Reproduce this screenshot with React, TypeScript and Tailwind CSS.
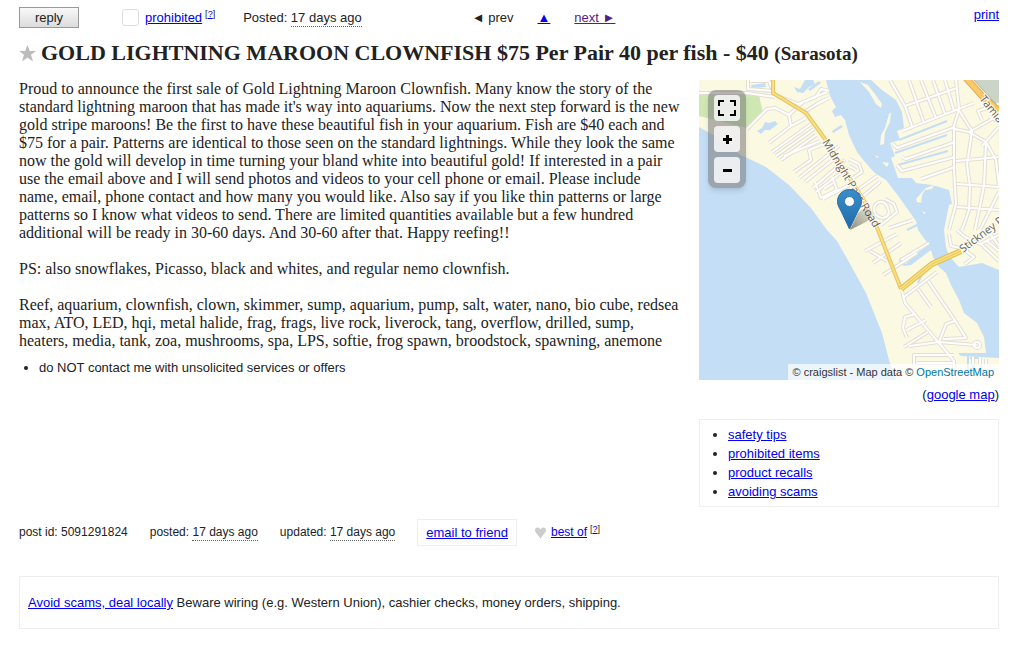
import type { ReactNode } from 'react';

const safetyLinks = ['safety tips', 'prohibited items', 'product recalls', 'avoiding scams'];

// side streets, in map units
const streets = [
  'M0 13 H48 L76 17', 'M49 0 V9 L74 11 L70 1 H52',
  'M48 49 L68 29 L76 28 L90 35 L92 46 L70 63', 'M90 35 L104 22 L128 12', 'M92 46 L107 38',
  'M74 14 L99 24 L117 17 L122 9 L130 11', 'M104 33 L118 24 L130 18',
  'M73 72 L112 44', 'M77 76 L115 49', 'M82 80 L117 55', 'M85 76 L121 61', 'M95 92 L112 80 L110 70 L125 64',
  'M100 98 L140 66', 'M106 102 L136 78', 'M114 108 L146 80', 'M117 112 L148 88',
  'M116 102 L122 118 L138 110 L133 97', 'M124 119 L150 105', 'M125 109 L134 103',
  'M150 79 L160 84 L163 92 L154 98', 'M150 86 L157 90', 'M160 109 L178 96', 'M164 116 L181 102',
  'M177 135 C170 124 184 117 188 126 C194 137 183 141 177 135', 'M186 119 L195 124 L198 132 L182 145', 'M190 148 L214 140',
  'M191 0 L206 26 L213 46', 'M206 26 L258 8', 'M210 0 L225 43', 'M222 0 L237 38', 'M234 0 L246 34', 'M246 0 L255 31',
  'M203 51 L275 23', 'M257 0 L260 29 L255 46 V90 L257 124 L250 150',
  'M194 64 L198 68 L256 47', 'M203 77 L207 79 L256 62', 'M198 85 L203 91 L256 77', 'M222 99 L256 87',
  'M256 49 L270 52 L287 62 L297 80 L300 106', 'M259 29 L273 51 L268 85 L271 106 L270 130 L263 150',
  'M270 52 L300 35', 'M283 66 L300 47', 'M287 62 L285 106 L276 150', 'M257 81 L300 77', 'M258 104 L300 107',
  'M258 127 L300 130', 'M300 112 L281 150', 'M283 40 L279 31 L300 24', 'M291 37 L300 42',
  'M166 171 L198 154', 'M174 183 L202 163', 'M171 171 L188 181', 'M202 180 L230 163', 'M184 195 L218 173',
  'M205 217 L238 192', 'M219 209 L232 227', 'M229 201 L255 239 L267 258 L245 259',
  'M203 211 L206 223 L229 250 L240 263 L255 281 V300', 'M217 234 L206 237 L204 248 L208 258',
  'M208 250 L227 240', 'M205 267 L229 252', 'M210 266 L240 262 L277 265', 'M240 262 L247 244 L256 241',
  'M215 285 V275 H255', 'M218 283 H254', 'M275 265 a3 3 0 1 0 6 0 a3 3 0 1 0 -6 0',
  'M250 154 L252 166 L262 168 L268 164 L268 172 L275 177 L266 184', 'M258 150 L266 157 L281 164 L300 155', 'M282 164 L300 181', 'M288 161 L300 171', 'M292 155 L300 166',
  'M274 285 V277', 'M281 285 V277', 'M287 285 V279',
];

const water = [
  // gulf
  'M0 47 L16 56 L42 75 L67 87 L90 105 L112 128 L128 150 L138 161 L150 182 L167 213 L183 253 L190 280 L197 300 H0 Z',
  // bay
  'M127 0 L131 16 L137 27 L133 31 L136 37 L142 35 L146 40 L150 55 L158 72 L166 82 L173 90 L177 94 L187 100 L200 117 L217 141 L219 150 L230 165 L214 176 L207 184 L201 177 L200 181 L205 186 L212 185 L232 170 L234 177 L240 187 L247 193 L252 205 L260 220 L265 233 L278 243 L285 257 L287 273 L259 273 L262 276 L300 278 V190 L283 183 L260 187 L250 176 L247 167 L245 150 L250 125 L253 124 L250 110 L233 105 L217 103 L213 98 L199 98 L192 78 L196 76 L191 63 L201 60 L198 51 L205 48 L203 32 L197 20 L183 10 L172 0 Z',
  'M106 0 L101 9 L95 7 L98 12 L104 13 L110 7 L116 4 L114 0 Z',
  'M133 51 L142 45 L144 47 L134 53 Z',
  'M58 51 L63 48 L66 42 L70 43 L76 41 L79 44 L71 50 L66 50 L62 54 Z',
  'M52 5 L66 3 L67 7 L53 8 Z',
  'M109 9 L120 1 L122 3 L111 11 Z',
  'M271 277 h12 v18 h-2 v-16 h-5 v16 h-3 v-16 h-2 Z',
];

const canals = ['M200 60 L248 41', 'M196 73 L248 55', 'M199 85 L249 71', 'M170 112 L182 102', 'M208 150 L222 143', 'M219 203 L223 194', 'M266 184 L276 177', 'M269 295 V276'];

const islands = [
  'M190 34 L192 32 L191 42 L186 52 L185 64 L181 65 L182 55 L186 48 Z',
  'M161 2 L169 5 L176 14 L183 24 L182 28 L177 24 L170 12 Z',
  'M176 75 L180 77 L178 78 Z', 'M183 82 L190 83 L188 87 Z',
  'M217 119 L223 112 L227 108 L235 105 L233 109 L226 110 L223 115 L222 123 L218 122 Z',
  'M223 131 L227 133 L225 134 Z',
];

const midnightPass = 'M74 0 V13 L107 33 L126 59 L148 94 L166 122 L179 150 L202 209';
const stickney = 'M202 209 L233 184 L262 171';
const tamiami = 'M267 -2 L284 17 L300 31';

const Streets = ({ className }: { className: string }) => (
  <g className={className} fill="none" strokeLinejoin="round">
    {streets.map((d) => <path key={d} d={d} />)}
  </g>
);

const MapTiles = () => (
  <svg viewBox="0 0 300 300" className="block size-full" role="img" aria-label="Map of Sarasota" fontFamily='"Open Sans", sans-serif'>
    <rect width="300" height="300" fill="#fcf9e3" />
    <path d="M0 15 H60 L64 33 L48 48 L0 36 Z" fill="#cfe8b3" />
    <path d="M275 0 H300 V29 Z" fill="#cbd5c7" />
    <g fill="#c4def5">{water.map((d) => <path key={d} d={d} />)}</g>
    <g stroke="#c4def5" strokeWidth="2" fill="none">{canals.map((d) => <path key={d} d={d} />)}</g>
    <g fill="#fcf9e3">{islands.map((d) => <path key={d} d={d} />)}</g>
    <Streets className="stroke-[#e2ded3] stroke-[4px]" />
    <Streets className="stroke-white stroke-[2px]" />
    <g fill="none" strokeLinejoin="round">
      <path d={midnightPass} stroke="#e8c55f" strokeWidth="4" />
      <path d={midnightPass} stroke="#f9df82" strokeWidth="2" />
      <path d={stickney} stroke="#e0bc51" strokeWidth="6" />
      <path d={stickney} stroke="#fae07a" strokeWidth="4" />
      <path d={stickney} stroke="#e6c863" strokeWidth="1" />
      <path d={tamiami} stroke="#e3ab4b" strokeWidth="7" />
      <path d={tamiami} stroke="#fbc96b" strokeWidth="5" />
      <path d="M275 0 L297 24" stroke="#aeb3a8" strokeWidth="1" />
    </g>
    <g fill="#606060" stroke="#fffdf0" strokeWidth="2" paintOrder="stroke" fontSize="11">
      <text transform="translate(123 62) rotate(59)">Midnight Pass Road</text>
      <text transform="translate(264 173) rotate(-37)">Stickney P</text>
      <text transform="translate(280 19) rotate(52)">Tamia</text>
    </g>
  </svg>
);

const MapMarker = () => (
  <svg viewBox="0 0 41 41" className="absolute top-[109px] left-[138px] size-[41px]" aria-hidden="true">
    <defs>
      <linearGradient id="pin" x1="0" y1="0" x2="0" y2="1">
        <stop offset="0" stopColor="#3b8ecb" />
        <stop offset="1" stopColor="#1f6ba9" />
      </linearGradient>
      <linearGradient id="shade" x1="0" y1="1" x2="1" y2="0">
        <stop offset="0" stopColor="#000" stopOpacity=".45" />
        <stop offset="1" stopColor="#000" stopOpacity=".08" />
      </linearGradient>
    </defs>
    <path d="M13 41 L20 26 C24 18 34 18 35 24 C36 31 25 35 13 41 Z" fill="url(#shade)" />
    <path d="M12.5 .5 C5.500 .5 .5 6 .5 12.500 C.5 16 2 18.500 4 22 L12.500 40 L21 22 C23 18.500 24.500 16 24.500 12.500 C24.500 6 19.500 .5 12.500 .5 Z" fill="url(#pin)" stroke="#2a6da3" />
    <circle cx="12.500" cy="12.500" r="5" fill="#fff" stroke="#2d76b0" />
  </svg>
);

const MapButton = ({ label, children }: { label: string; children: ReactNode }) => (
  <button type="button" aria-label={label} className="flex size-[26px] items-center justify-center rounded-sm bg-white/80">
    {children}
  </button>
);

const Link = ({ children, className = 'text-[#0000ee]' }: { children: ReactNode; className?: string }) => (
  <a href="#" className={`underline ${className}`}>{children}</a>
);

const Help = () => (
  <span className="mb-[6px] ml-[3px] text-[9px] leading-none">[<Link>?</Link>]</span>
);

const Ago = () => <time className="border-b border-dotted border-[#666] pb-px">17 days ago</time>;

export default function App() {
  return (
    <div className="bg-white pr-5 pl-[19px] font-['Liberation_Sans',Arial,sans-serif] text-[13px] leading-[18px] text-[#222]">
      <header className="flex h-[35px] items-center">
        <button type="button" className="h-[21px] w-[60px] border border-[#999] bg-linear-to-b from-[#f8f8f8] to-[#dcdcdc] leading-none">reply</button>
        <div className="ml-[43px] flex items-center">
          <input id="flag" type="checkbox" className="size-[17px] appearance-none rounded-[3px] border border-[#ddd]" />
          <label htmlFor="flag" className="ml-[6px]"><Link>prohibited</Link></label>
          <Help />
        </div>
        <p className="ml-7">Posted: <Ago /></p>
        <nav className="ml-[110px] flex gap-6">
          <span>◄ prev</span>
          <Link>▲</Link>
          <Link className="text-[#551a8b]">next ►</Link>
        </nav>
        <span className="mb-[6px] ml-auto"><Link>print</Link></span>
      </header>

      <h1 className="mb-2 flex h-[37px] items-center font-['Liberation_Serif','Times_New_Roman',serif] text-[22px] leading-9 font-bold">
        <svg viewBox="0 0 17 17" className="mr-[5px] size-[17px]" aria-hidden="true">
          <path d="M8.500 0 L10.800 6 H17 L12 9.800 L14 16.500 L8.500 12.600 L3 16.500 L5 9.800 L0 6 H6.200 Z" fill="#bbb" />
        </svg>
        <span>GOLD LIGHTNING MAROON CLOWNFISH $75 Per Pair 40 per fish - $40 <small className="text-[19px]">(Sarasota)</small></span>
      </h1>

      <main className="flex justify-between gap-[18px]">
        <section className="min-w-0 flex-1">
          <div className="space-y-[18px] font-['Liberation_Serif','Times_New_Roman',serif] text-[16px] leading-[18px]">
            <p>
              Proud to announce the first sale of Gold Lightning Maroon Clownfish. Many know the story of the standard
              lightning maroon that has made it's way into aquariums. Now the next step forward is the new gold stripe
              maroons! Be the first to have these beautiful fish in your aquarium. Fish are $40 each and $75 for a pair.
              Patterns are identical to those seen on the standard lightnings. While they look the same now the gold
              will develop in time turning your bland white into beautiful gold! If interested in a pair use the email
              above and I will send photos and videos to your cell phone or email. Please include name, email, phone
              contact and how many you would like. Also say if you like thin patterns or large patterns so I know what
              videos to send. There are limited quantities available but a few hundred additional will be ready in 30-60
              days. And 30-60 after that. Happy reefing!!
            </p>
            <p>PS: also snowflakes, Picasso, black and whites, and regular nemo clownfish.</p>
            <p>
              Reef, aquarium, clownfish, clown, skimmer, sump, aquarium, pump, salt, water, nano, bio cube, redsea max,
              ATO, LED, hqi, metal halide, frag, frags, live rock, liverock, tang, overflow, drilled, sump, heaters,
              media, tank, zoa, mushrooms, spa, LPS, softie, frog spawn, broodstock, spawning, anemone
            </p>
          </div>
          <ul className="mt-[9px] list-disc pl-5">
            <li>do NOT contact me with unsolicited services or offers</li>
          </ul>
        </section>

        <aside className="w-[300px] shrink-0">
          <div className="relative h-[300px] overflow-hidden">
            <MapTiles />
            <MapMarker />
            <div className="absolute top-[10px] left-[9px] flex flex-col gap-[5px] rounded-lg bg-[#777]/55 px-[6px] py-[5px] shadow-md">
              <MapButton label="Full screen">
                <svg viewBox="0 0 18 16" className="h-4 w-[18px]" fill="none" stroke="#000" strokeWidth="2">
                  <path d="M1 6 V1 H6 M12 1 H17 V6 M17 10 V15 H12 M6 15 H1 V10" />
                </svg>
              </MapButton>
              <MapButton label="Zoom in">
                <svg viewBox="0 0 9 9" className="size-[9px]" stroke="#000" strokeWidth="3"><path d="M0 4.500 H9 M4.500 0 V9" /></svg>
              </MapButton>
              <MapButton label="Zoom out">
                <svg viewBox="0 0 9 9" className="size-[9px]" stroke="#000" strokeWidth="3"><path d="M0 4.500 H9" /></svg>
              </MapButton>
            </div>
            <p className="absolute right-0 bottom-0 bg-white/70 px-[5px] text-[11px] leading-4 text-[#333]">
              © craigslist - Map data © <a href="#" className="text-[#0078a8]">OpenStreetMap</a>
            </p>
          </div>
          <p className="mt-[6px] text-right">(<Link>google map</Link>)</p>
          <ul className="mt-[15px] list-disc border border-[#eee] py-[5px] pl-7 leading-[19px]">
            {safetyLinks.map((text) => <li key={text}><Link>{text}</Link></li>)}
          </ul>
        </aside>
      </main>

      <footer className="leading-[17px]">
        <div className="mt-3 flex items-center text-[12px] leading-[17px]">
          <span>post id: 5091291824</span>
          <span className="ml-[22px]">posted: <Ago /></span>
          <span className="ml-[22px]">updated: <Ago /></span>
          <span className="ml-[22px] border border-[#eee] px-2 py-1 text-[13px] leading-[17px]"><Link>email to friend</Link></span>
          <svg viewBox="0 0 11 12" className="mr-[5px] ml-[18px] h-3 w-[11px]" aria-hidden="true">
            <path d="M5.500 12 C4.500 9 0 6 0 3 C0 0 4 -.5 5.500 2.500 C7 -.5 11 0 11 3 C11 6 6.500 9 5.500 12 Z" fill="#ccc" />
          </svg>
          <Link>best of</Link>
          <Help />
        </div>
        <p className="mt-[30px] border border-[#eee] px-2 py-[17px]">
          <Link>Avoid scams, deal locally</Link> Beware wiring (e.g. Western Union), cashier checks, money orders, shipping.
        </p>
      </footer>
    </div>
  );
}
